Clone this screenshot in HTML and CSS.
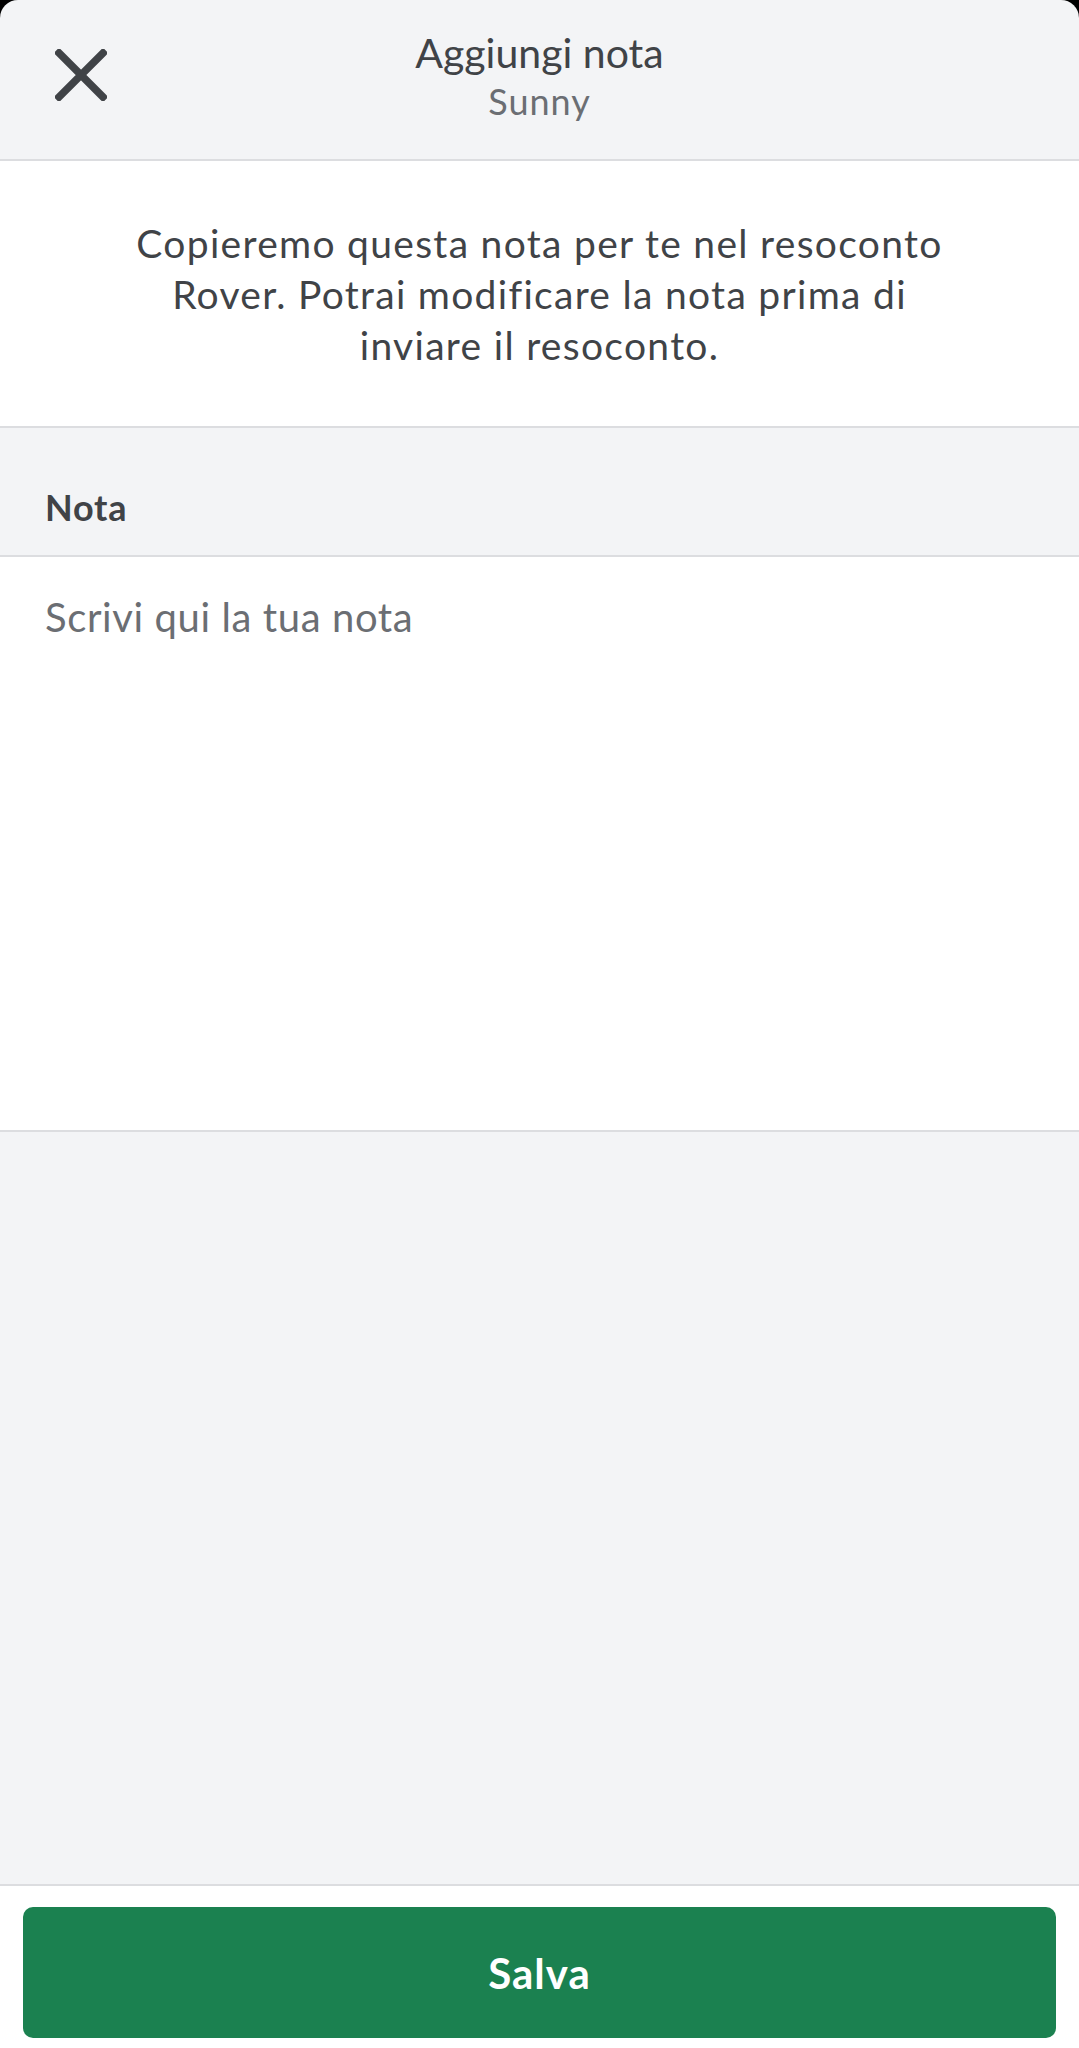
FILE: index.html
```html
<!DOCTYPE html>
<html lang="it">
<head>
  <meta charset="UTF-8">
  <title>Aggiungi nota</title>
  <link rel="stylesheet" href="styles.css">
</head>
<body>
<div class="sheet">
  <!-- intestazione -->
  <div class="header">
    <a class="close" href="#">
      <svg width="52" height="52" viewBox="0 0 52 52">
        <path d="M4 4 L48 48 M48 4 L4 48" stroke="#404347" stroke-width="7.5" stroke-linecap="square" fill="none"/>
      </svg>
    </a>
    <div class="title">
      <div class="main">Aggiungi nota</div>
      <div class="sub">Sunny</div>
    </div>
  </div>

  <div class="intro">
    <p>Copieremo questa nota per te nel resoconto<br>Rover. Potrai modificare la nota prima di<br>inviare il resoconto.</p>
  </div>

  <div class="label">Nota</div>

  <div class="note">
    <textarea placeholder="Scrivi qui la tua nota"></textarea>
  </div>

  <div class="filler"></div>

  <div class="footer">
    <button class="save">Salva</button>
  </div>
</div>
</body>
</html>
```

FILE: styles.css
```css
* {
  margin: 0;
  padding: 0;
  box-sizing: border-box;
}

body {
  background-color: #000;
  font-family: Lato, "Open Sans", sans-serif;
  color: #404347;
}

.sheet {
  height: 2048px;
  display: flex;
  flex-direction: column;
  background-color: #f3f4f6;
  border-radius: 18px 18px 0 0;
  overflow: hidden;
}

.header {
  height: 161px;
  position: relative;
  border-bottom: 2px solid #dcdde0;
  display: flex;
  justify-content: center;
  text-align: center;
}

.close {
  position: absolute;
  left: 55px;
  top: 49px;
  width: 52px;
  height: 52px;
}

.close svg {
  display: block;
}

.title {
  padding-top: 29px;
}

.title .main {
  font-size: 41px;
  line-height: 48px;
}

.title .sub {
  margin-top: 2px;
  font-size: 36px;
  line-height: 44px;
  letter-spacing: 1px;
  color: #6b6e73;
}

.intro {
  height: 267px;
  background-color: #fff;
  border-bottom: 2px solid #dcdde0;
  padding-top: 57px;
  text-align: center;
}

.intro p {
  font-size: 39px;
  line-height: 51px;
  letter-spacing: 1.3px;
}

.label {
  height: 129px;
  border-bottom: 2px solid #dcdde0;
  padding: 59px 45px 0;
  font-size: 36px;
  font-weight: bold;
  line-height: 40px;
  letter-spacing: 0.8px;
}

.note {
  height: 575px;
  background-color: #fff;
  border-bottom: 2px solid #dcdde0;
}

.note textarea {
  display: block;
  width: 100%;
  height: 100%;
  border: 0;
  outline: 0;
  resize: none;
  background: transparent;
  padding: 36px 45px;
  font-family: Lato, "Open Sans", sans-serif;
  font-size: 40px;
  line-height: 48px;
  letter-spacing: 0.6px;
  color: #404347;
}

.note textarea::placeholder {
  color: #6b6e73;
}

.filler {
  flex: 1;
}

.footer {
  height: 164px;
  background-color: #fff;
  border-top: 2px solid #dcdde0;
  padding: 21px 23px 0;
}

.save {
  display: block;
  width: 100%;
  height: 131px;
  border: 0;
  border-radius: 10px;
  background-color: #1b8150;
  color: #fff;
  font-family: Lato, "Open Sans", sans-serif;
  font-size: 42px;
  font-weight: bold;
  letter-spacing: 1px;
  cursor: pointer;
}
```
